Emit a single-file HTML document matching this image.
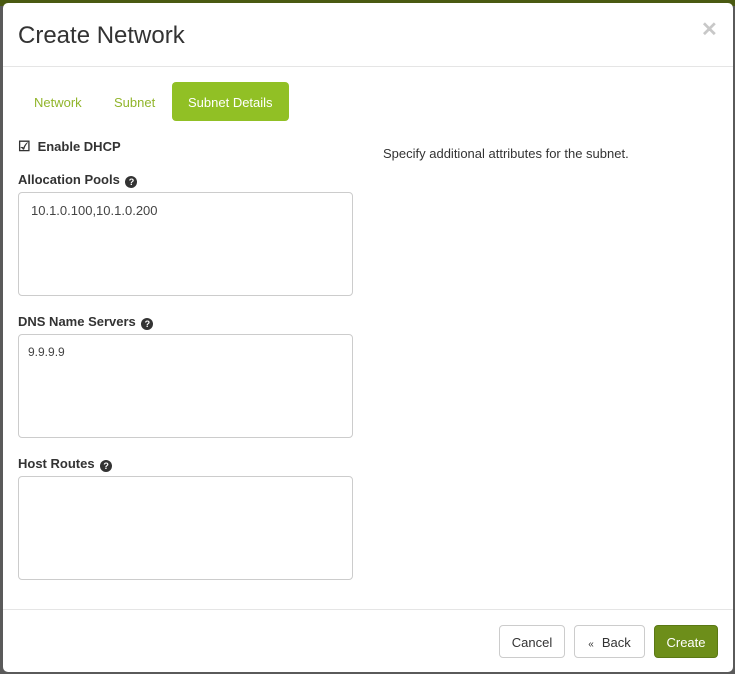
<!DOCTYPE html>
<html><head><style>
*{box-sizing:border-box;margin:0;padding:0}
body{width:735px;height:674px;background:#5a5a5a;position:relative;overflow:hidden;font-family:"Liberation Sans",sans-serif;color:#333}
.top{position:absolute;left:0;top:0;width:735px;height:6px;background:#4a5a12}
.modal{position:absolute;left:3px;top:3px;width:730px;height:669px;background:#fff;border-radius:5px}
h1{position:absolute;left:15px;top:19px;font-size:24px;font-weight:normal;color:#333}
.close{position:absolute;left:698px;top:14px;font-size:20px;font-weight:bold;color:#c8c8c8}
.hr1{position:absolute;left:0;top:63px;width:730px;border-top:1px solid #e5e5e5}
.hr2{position:absolute;left:0;top:606px;width:730px;border-top:1px solid #e5e5e5}
.tab{position:absolute;top:79px;height:39px;line-height:41px;font-size:13px;color:#91b52b;padding:0 16px}
.tab.act{background:#91c025;color:#fff;border-radius:4px}
.lbl{position:absolute;left:15px;font-size:13px;font-weight:bold;color:#333}
.q{display:inline-block;width:12px;height:12px;border-radius:50%;background:#333;color:#fff;font-size:9px;text-align:center;line-height:12px;vertical-align:-1px;margin-left:2px}
.ta{position:absolute;left:15px;width:335px;height:104px;border:1px solid #ccc;border-radius:4px;font-size:13px;padding:10px 12px;color:#444}
.help{position:absolute;left:380px;top:143px;font-size:13px;color:#333}
.btn{position:absolute;top:622px;height:33px;line-height:33px;border:1px solid #ccc;border-radius:4px;font-size:13px;text-align:center;color:#333;background:#fff}
</style></head><body>
<div class="top"></div>
<div class="modal">
<h1>Create Network</h1>
<div class="close">✕</div>
<div class="hr1"></div>
<div class="tab" style="left:15px">Network</div>
<div class="tab" style="left:95px">Subnet</div>
<div class="tab act" style="left:169px">Subnet Details</div>
<div class="lbl" style="top:135px"><span style="font-size:14px;margin-right:7px">☑</span>Enable DHCP</div>
<div class="lbl" style="top:169px">Allocation Pools <span class="q">?</span></div>
<div class="ta" style="top:189px;padding-left:12px">10.1.0.100,10.1.0.200</div>
<div class="lbl" style="top:311px">DNS Name Servers <span class="q">?</span></div>
<div class="ta" style="top:331px;padding-left:9px;font-size:12px">9.9.9.9</div>
<div class="lbl" style="top:453px">Host Routes <span class="q">?</span></div>
<div class="ta" style="top:473px"></div>
<div class="help">Specify additional attributes for the subnet.</div>
<div class="hr2"></div>
<div class="btn" style="left:496px;width:66px">Cancel</div>
<div class="btn" style="left:571px;width:71px"><span style="font-size:10px;margin-right:8px">«</span>Back</div>
<div class="btn" style="left:651px;width:64px;background:#6d8e1a;border-color:#5a7814;color:#fff">Create</div>
</div>
</body></html>
